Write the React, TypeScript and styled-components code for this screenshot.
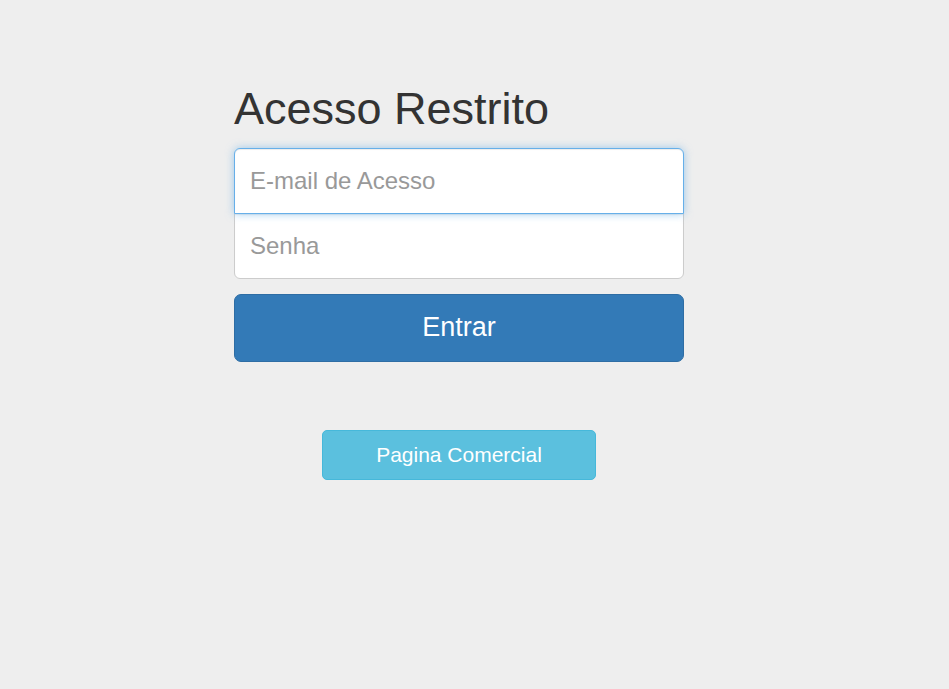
import styled, { createGlobalStyle } from 'styled-components';

const GlobalStyle = createGlobalStyle`
  html, body {
    margin: 0;
    padding: 0;
    background-color: #EEEEEE;
    font-family: "Liberation Sans", Arial, Helvetica, sans-serif;
    color: #333333;
  }

  * {
    box-sizing: border-box;
  }
`;

const Page = styled.div`
  width: 918px;
  min-height: 689px;
  padding-top: 84px;
`;

const SigninForm = styled.form`
  width: 450px;
  margin: 0 auto;
  display: flex;
  flex-direction: column;
`;

const Heading = styled.h2`
  margin: 0 0 14px;
  font-size: 45px;
  font-weight: 400;
  line-height: 1.1;
  color: #333333;
`;

const Field = styled.input<{ $position: 'top' | 'bottom'; $focused?: boolean }>`
  position: relative;
  display: block;
  width: 100%;
  height: 66px;
  padding: 0 15px;
  font-family: inherit;
  font-size: 24px;
  color: #555555;
  background-color: #FFFFFF;
  border: 1px solid ${(p) => (p.$focused ? '#66AFE9' : '#CCCCCC')};
  outline: 0;
  z-index: ${(p) => (p.$focused ? 2 : 1)};
  box-shadow: ${(p) => (p.$focused
    ? 'inset 0 1px 1px rgba(0, 0, 0, .075), 0 0 8px rgba(102, 175, 233, .6)'
    : 'inset 0 1px 1px rgba(0, 0, 0, .075)')};
  border-radius: ${(p) => (p.$position === 'top' ? '6px 6px 0 0' : '0 0 6px 6px')};
  margin-top: ${(p) => (p.$position === 'bottom' ? '-1px' : '0')};

  &::placeholder {
    color: #999999;
  }
`;

const PrimaryButton = styled.button`
  margin-top: 15px;
  width: 100%;
  height: 68px;
  font-family: inherit;
  font-size: 27px;
  color: #FFFFFF;
  background-color: #337AB7;
  border: 1px solid #2E6DA4;
  border-radius: 7px;
  cursor: pointer;
`;

const LinkRow = styled.div`
  display: flex;
  justify-content: center;
  margin-top: 68px;
`;

const InfoButton = styled.a`
  display: flex;
  align-items: center;
  justify-content: center;
  width: 274px;
  height: 50px;
  font-size: 21px;
  color: #FFFFFF;
  text-decoration: none;
  background-color: #5BC0DE;
  border: 1px solid #46B8DA;
  border-radius: 5px;
  cursor: pointer;
`;

function App() {
  return (
    <>
      <GlobalStyle />
      <Page>
        <SigninForm onSubmit={(e) => e.preventDefault()}>
          <Heading>Acesso Restrito</Heading>
          <Field $position="top" $focused type="email" placeholder="E-mail de Acesso" />
          <Field $position="bottom" type="password" placeholder="Senha" />
          <PrimaryButton type="submit">Entrar</PrimaryButton>
        </SigninForm>
        <LinkRow>
          <InfoButton href="#">Pagina Comercial</InfoButton>
        </LinkRow>
      </Page>
    </>
  );
}

export default App;
